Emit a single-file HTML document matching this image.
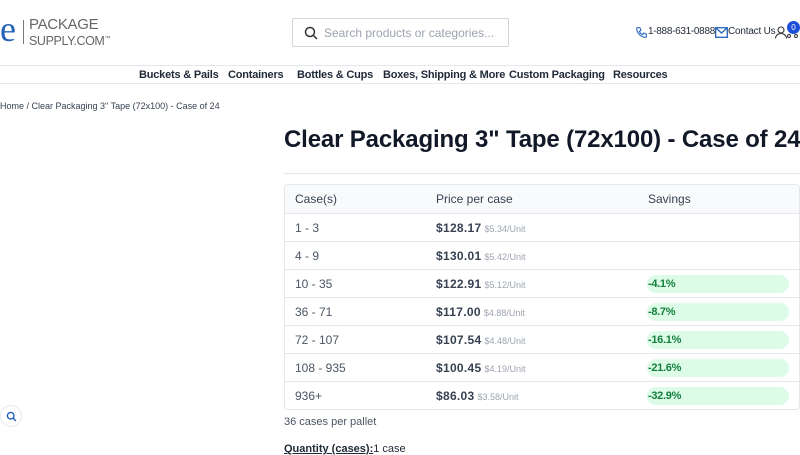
<!DOCTYPE html>
<html><head><meta charset="utf-8"><style>
*{margin:0;padding:0;box-sizing:border-box}
body{width:800px;height:450px;overflow:hidden;background:#fff;font-family:"Liberation Sans",sans-serif;color:#1f2937;position:relative}
.abs{position:absolute}
.nav{top:65px;left:0;width:800px;height:19px;border-top:1px solid #e5e7eb;border-bottom:1px solid #e5e7eb}
.nav span{position:absolute;top:3px;font-size:11px;font-weight:bold;color:#1f2937;letter-spacing:-0.2px;white-space:nowrap}
.tbl{left:284px;top:184px;width:516px;border:1px solid #e5e7eb;border-radius:4px;overflow:hidden}
.row{position:relative;height:28px;border-top:1px solid #e5e7eb;font-size:12px;color:#4b5563}
.row:first-child{border-top:none;background:#f9fafb;color:#374151}
.row div{position:absolute;top:7px}
.c1{left:10px}.c2{left:151px}.c3{left:363px}
.p{font-weight:bold;color:#374151;letter-spacing:0.3px}
.u{font-size:9px;color:#9ca3af;margin-left:3px}
.b{position:absolute;left:362px!important;top:5px!important;width:142px;height:18px;border-radius:9px;background:#dcfce7;color:#15803d;font-weight:bold;font-size:11px;padding:3px 1px;letter-spacing:-0.3px}
</style></head><body>
<div class="abs" style="left:0;top:11px;font-family:'Liberation Serif',serif;font-size:36px;color:#2563b8;line-height:36px">e</div>
<div class="abs" style="left:23px;top:20px;width:1px;height:24px;background:#777"></div>
<div class="abs" style="left:29px;top:18px;font-size:15px;color:#666;line-height:14px;letter-spacing:-0.3px">PACKAGE<br><span style="font-size:12.5px;letter-spacing:-0.4px">SUPPLY.COM<sup style="font-size:6px">™</sup></span></div>
<div class="abs" style="left:292px;top:18px;width:217px;height:29px;border:1px solid #d1d5db;border-radius:2px">
<svg class="abs" style="left:11px;top:7px" width="14" height="14" viewBox="0 0 14 14"><circle cx="6" cy="6" r="4.5" fill="none" stroke="#333" stroke-width="1.5"/><path d="M9.5 9.5L13 13" stroke="#333" stroke-width="1.5"/></svg>
<span class="abs" style="left:31px;top:7px;font-size:12px;color:#9ca3af">Search products or categories...</span></div>
<svg class="abs" style="left:635px;top:26px" width="13" height="13" viewBox="0 0 24 24"><path d="M5 3h4l2 5-3 2a11 11 0 006 6l2-3 5 2v4a2 2 0 01-2 2A18 18 0 013 5a2 2 0 012-2z" fill="none" stroke="#2563b8" stroke-width="2"/></svg>
<span class="abs" style="left:648px;top:26px;font-size:10px;color:#1f2937;letter-spacing:-0.3px">1-888-631-0888</span>
<svg class="abs" style="left:715px;top:27px" width="13" height="11" viewBox="0 0 13 11"><rect x="0.7" y="0.7" width="11.6" height="9.6" fill="none" stroke="#2563b8" stroke-width="1.3"/><path d="M1 1l5.5 5 5.5-5" fill="none" stroke="#2563b8" stroke-width="1.3"/></svg>
<span class="abs" style="left:728px;top:26px;font-size:10px;color:#1f2937;letter-spacing:-0.2px">Contact Us</span>
<svg class="abs" style="left:775px;top:26px" width="12" height="13" viewBox="0 0 12 13"><circle cx="6" cy="4" r="3" fill="none" stroke="#333" stroke-width="1.1"/><path d="M0.5 12.5a5.5 5 0 0111 0" fill="none" stroke="#333" stroke-width="1.1"/></svg>
<div class="abs" style="left:787px;top:21px;width:13px;height:13px;border-radius:50%;background:#1d4ed8;color:#fff;font-size:8px;text-align:center;line-height:13px">0</div>
<div class="abs" style="left:787px;top:34px;width:4px;height:4px;border-radius:50%;border:1px solid #333"></div>
<div class="abs" style="left:794px;top:34px;width:4px;height:4px;border-radius:50%;border:1px solid #333"></div>
<div class="abs nav"><span style="left:139px">Buckets &amp; Pails</span><span style="left:228px">Containers</span><span style="left:297px">Bottles &amp; Cups</span><span style="left:383px">Boxes, Shipping &amp; More</span><span style="left:509px">Custom Packaging</span><span style="left:613px">Resources</span></div>
<div class="abs" style="left:0;top:101px;font-size:9px;color:#374151">Home / Clear Packaging 3" Tape (72x100) - Case of 24</div>
<div class="abs" style="left:284px;top:126px;font-size:24px;font-weight:bold;color:#111827;white-space:nowrap;letter-spacing:-0.15px">Clear Packaging 3" Tape (72x100) - Case of 24</div>
<div class="abs" style="left:284px;top:173px;width:516px;height:1px;background:#e5e7eb"></div>
<div class="abs tbl">
<div class="row"><div class="c1">Case(s)</div><div class="c2">Price per case</div><div class="c3">Savings</div></div>
<div class="row"><div class="c1">1 - 3</div><div class="c2"><span class="p">$128.17</span><span class="u">$5.34/Unit</span></div></div>
<div class="row"><div class="c1">4 - 9</div><div class="c2"><span class="p">$130.01</span><span class="u">$5.42/Unit</span></div></div>
<div class="row"><div class="c1">10 - 35</div><div class="c2"><span class="p">$122.91</span><span class="u">$5.12/Unit</span></div><div class="b">-4.1%</div></div>
<div class="row"><div class="c1">36 - 71</div><div class="c2"><span class="p">$117.00</span><span class="u">$4.88/Unit</span></div><div class="b">-8.7%</div></div>
<div class="row"><div class="c1">72 - 107</div><div class="c2"><span class="p">$107.54</span><span class="u">$4.48/Unit</span></div><div class="b">-16.1%</div></div>
<div class="row"><div class="c1">108 - 935</div><div class="c2"><span class="p">$100.45</span><span class="u">$4.19/Unit</span></div><div class="b">-21.6%</div></div>
<div class="row"><div class="c1">936+</div><div class="c2"><span class="p">$86.03</span><span class="u">$3.58/Unit</span></div><div class="b">-32.9%</div></div>
</div>
<div class="abs" style="left:284px;top:416px;font-size:11px;color:#4b5563">36 cases per pallet</div>
<div class="abs" style="left:284px;top:443px;font-size:11px;color:#1f2937"><b style="text-decoration:underline">Quantity (cases):</b>1 case</div>
<div class="abs" style="left:0;top:405px;width:22px;height:22px;border-radius:50%;border:1px solid #e5e7eb;background:#fff">
<svg class="abs" style="left:5px;top:5px" width="11" height="11" viewBox="0 0 11 11"><circle cx="4.7" cy="4.7" r="3.3" fill="none" stroke="#2563b8" stroke-width="1.4"/><path d="M7.2 7.2L10 10" stroke="#2563b8" stroke-width="1.4"/></svg></div>
</body></html>
